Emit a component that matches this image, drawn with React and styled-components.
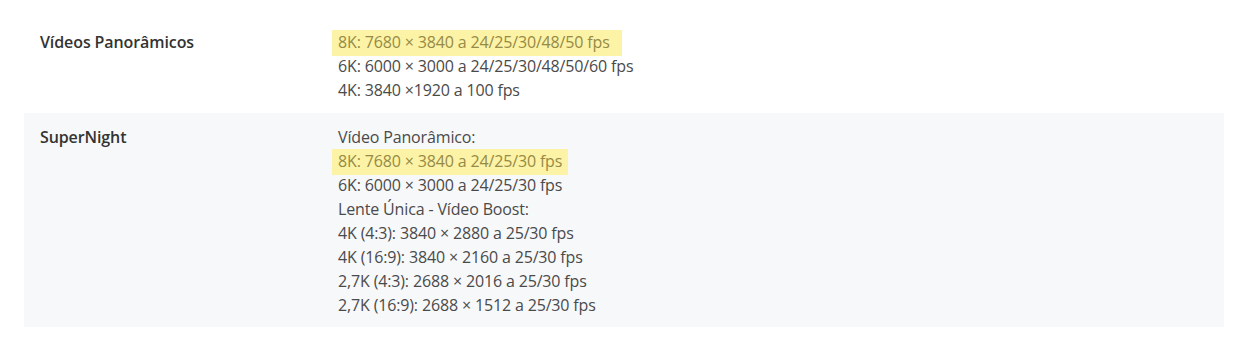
import React from 'react';
import styled, { createGlobalStyle } from 'styled-components';

const specs = [
    {
        label: "Vídeos Panorâmicos",
        lines: [
            { text: "8K: 7680 × 3840 a 24/25/30/48/50 fps", mark: 12 },
            { text: "6K: 6000 × 3000 a 24/25/30/48/50/60 fps" },
            { text: "4K: 3840 ×1920 a 100 fps" },
        ],
    },
    {
        label: "SuperNight",
        lines: [
            { text: "Vídeo Panorâmico:" },
            { text: "8K: 7680 × 3840 a 24/25/30 fps", mark: 6 },
            { text: "6K: 6000 × 3000 a 24/25/30 fps" },
            { text: "Lente Única - Vídeo Boost:" },
            { text: "4K (4:3): 3840 × 2880 a 25/30 fps" },
            { text: "4K (16:9): 3840 × 2160 a 25/30 fps" },
            { text: "2,7K (4:3): 2688 × 2016 a 25/30 fps" },
            { text: "2,7K (16:9): 2688 × 1512 a 25/30 fps" },
        ],
    },
];

function App()
{
    return (
        <>
            <GlobalStyle />
            <Table>
                {specs.map((row, i) => (
                    <Row key={row.label} $striped={i % 2 === 1}>
                        <Label>{row.label}</Label>
                        <Value>
                            {row.lines.map((line) => (
                                <Line key={line.text}>
                                    {line.mark ? <Mark $tail={line.mark}>{line.text}</Mark> : line.text}
                                </Line>
                            ))}
                        </Value>
                    </Row>
                ))}
            </Table>
        </>
    );
}

const GlobalStyle = createGlobalStyle`
    body
    {
        margin: 0;
        background: #ffffff;
        font-family: "Open Sans", "Noto Sans", sans-serif;
    }
`;

const Table = styled.div`
    width: 1200px;
    margin: 18px 0 0 24px;
`;

const Row = styled.div`
    display: grid;
    grid-template-columns: 298px 1fr;
    padding: 12px 16px 11px;
    background: ${(p) => (p.$striped ? "#f7f8fa" : "transparent")};

    &:last-child
    {
        padding-bottom: 10px;
    }
`;

const Label = styled.div`
    font-size: 16px;
    line-height: 24px;
    font-weight: 600;
    color: #333333;
    letter-spacing: -0.1px;
`;

const Value = styled.div`
    font-size: 16px;
    line-height: 24px;
    color: #4a4a4a;
    letter-spacing: -0.15px;
`;

const Line = styled.div`
    white-space: nowrap;
`;

const Mark = styled.span`
    background: #fcf3a6;
    color: #968a45;
    padding: 1px ${(p) => p.$tail}px 3px 6px;
    margin-left: -6px;
`;

export default App;
